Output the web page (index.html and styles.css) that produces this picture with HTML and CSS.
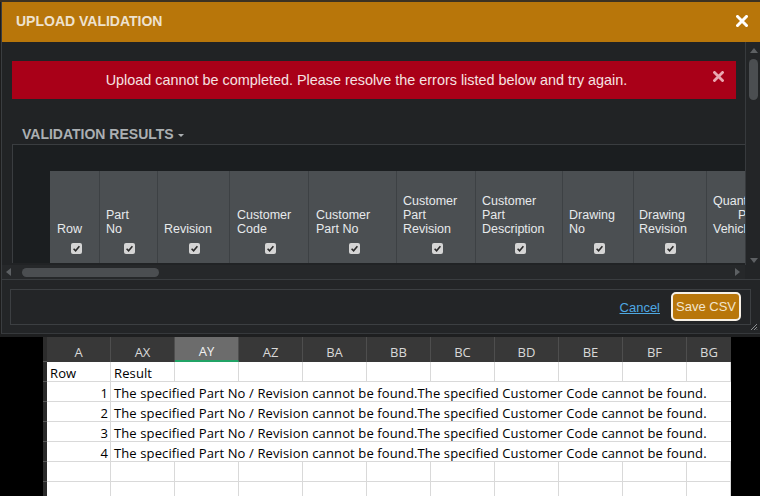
FILE: index.html
```html
<!DOCTYPE html>
<html>
<head>
<meta charset="utf-8">
<title>Upload Validation</title>
<link rel="stylesheet" href="styles.css">
</head>
<body>
<div class="page">
  <div class="backdrop"></div>
  <div class="dialog">
    <div class="titlebar">
      <span class="title">UPLOAD VALIDATION</span>
      <svg class="title-x" width="12" height="12" viewBox="0 0 12 12"><path d="M1.5 1.5L10.5 10.5M10.5 1.5L1.5 10.5" stroke="#ffffff" stroke-width="3" stroke-linecap="square"/></svg>
    </div>
    <div class="scrollarea">
      <div class="content">
        <div class="alert">
          <span class="alert-text">Upload cannot be completed. Please resolve the errors listed below and try again.</span>
          <svg class="alert-x" width="11" height="11" viewBox="0 0 11 11"><path d="M1.5 1.5L9.5 9.5M9.5 1.5L1.5 9.5" stroke="#e9a7b0" stroke-width="2.8" stroke-linecap="square"/></svg>
        </div>
        <div class="section">VALIDATION RESULTS<span class="caret"></span></div>
        <div class="gridbox">
          <div class="thead">
            <div class="th c1"><div class="lbl">Row</div><svg class="cb" width="11" height="11" viewBox="0 0 11 11"><rect width="11" height="11" rx="2" fill="#d5d5d5"/><path d="M2.6 5.7L4.6 7.8L8.4 3.2" fill="none" stroke="#2b2b2b" stroke-width="1.6"/></svg></div>
            <div class="th c2"><div class="lbl">Part<br>No</div><svg class="cb" width="11" height="11" viewBox="0 0 11 11"><rect width="11" height="11" rx="2" fill="#d5d5d5"/><path d="M2.6 5.7L4.6 7.8L8.4 3.2" fill="none" stroke="#2b2b2b" stroke-width="1.6"/></svg></div>
            <div class="th c3"><div class="lbl">Revision</div><svg class="cb" width="11" height="11" viewBox="0 0 11 11"><rect width="11" height="11" rx="2" fill="#d5d5d5"/><path d="M2.6 5.7L4.6 7.8L8.4 3.2" fill="none" stroke="#2b2b2b" stroke-width="1.6"/></svg></div>
            <div class="th c4"><div class="lbl">Customer<br>Code</div><svg class="cb" width="11" height="11" viewBox="0 0 11 11"><rect width="11" height="11" rx="2" fill="#d5d5d5"/><path d="M2.6 5.7L4.6 7.8L8.4 3.2" fill="none" stroke="#2b2b2b" stroke-width="1.6"/></svg></div>
            <div class="th c5"><div class="lbl">Customer<br>Part No</div><svg class="cb" width="11" height="11" viewBox="0 0 11 11"><rect width="11" height="11" rx="2" fill="#d5d5d5"/><path d="M2.6 5.7L4.6 7.8L8.4 3.2" fill="none" stroke="#2b2b2b" stroke-width="1.6"/></svg></div>
            <div class="th c6"><div class="lbl">Customer<br>Part<br>Revision</div><svg class="cb" width="11" height="11" viewBox="0 0 11 11"><rect width="11" height="11" rx="2" fill="#d5d5d5"/><path d="M2.6 5.7L4.6 7.8L8.4 3.2" fill="none" stroke="#2b2b2b" stroke-width="1.6"/></svg></div>
            <div class="th c7"><div class="lbl">Customer<br>Part<br>Description</div><svg class="cb" width="11" height="11" viewBox="0 0 11 11"><rect width="11" height="11" rx="2" fill="#d5d5d5"/><path d="M2.6 5.7L4.6 7.8L8.4 3.2" fill="none" stroke="#2b2b2b" stroke-width="1.6"/></svg></div>
            <div class="th c8"><div class="lbl">Drawing<br>No</div><svg class="cb" width="11" height="11" viewBox="0 0 11 11"><rect width="11" height="11" rx="2" fill="#d5d5d5"/><path d="M2.6 5.7L4.6 7.8L8.4 3.2" fill="none" stroke="#2b2b2b" stroke-width="1.6"/></svg></div>
            <div class="th c9"><div class="lbl">Drawing<br>Revision</div><svg class="cb" width="11" height="11" viewBox="0 0 11 11"><rect width="11" height="11" rx="2" fill="#d5d5d5"/><path d="M2.6 5.7L4.6 7.8L8.4 3.2" fill="none" stroke="#2b2b2b" stroke-width="1.6"/></svg></div>
            <div class="th c10"><div class="lbl">Quantity<br><span class="indent">Per</span><br>Vehicle</div><svg class="cb" width="11" height="11" viewBox="0 0 11 11"><rect width="11" height="11" rx="2" fill="#d5d5d5"/><path d="M2.6 5.7L4.6 7.8L8.4 3.2" fill="none" stroke="#2b2b2b" stroke-width="1.6"/></svg></div>
          </div>
        </div>
      </div>
      <div class="vscroll">
        <span class="arrow-up"></span>
        <span class="vthumb"></span>
        <span class="arrow-down"></span>
      </div>
      <div class="hscroll">
        <span class="arrow-left"></span>
        <span class="hthumb"></span>
        <span class="arrow-right"></span>
      </div>
      <div class="corner"></div>
    </div>
    <div class="footer">
      <div class="footbox">
        <a class="cancel" href="#">Cancel</a>
        <button class="save">Save CSV</button>
      </div>
      <svg class="grip" width="8" height="8" viewBox="0 0 8 8"><path d="M7 1L1 7M7 4L4 7M7 6.5L6.5 7" stroke="#8a8d90" stroke-width="1"/></svg>
    </div>
  </div>
  <div class="gap"></div>
  <div class="excel">
    <div class="black"></div>
    <div class="sheet">
      <div class="ch rh"></div><div class="ch">A</div><div class="ch">AX</div><div class="ch sel">AY</div><div class="ch">AZ</div><div class="ch">BA</div><div class="ch">BB</div><div class="ch">BC</div><div class="ch">BD</div><div class="ch">BE</div><div class="ch">BF</div><div class="ch last">BG</div>

      <div class="rh"></div><div class="c">Row</div><div class="c">Result</div><div class="c"></div><div class="c"></div><div class="c"></div><div class="c"></div><div class="c"></div><div class="c"></div><div class="c"></div><div class="c"></div><div class="c"></div>

      <div class="rh"></div><div class="c num">1</div><div class="c wide">The specified Part No / Revision cannot be found.The specified Customer Code cannot be found.</div>
      <div class="rh"></div><div class="c num">2</div><div class="c wide">The specified Part No / Revision cannot be found.The specified Customer Code cannot be found.</div>
      <div class="rh"></div><div class="c num">3</div><div class="c wide">The specified Part No / Revision cannot be found.The specified Customer Code cannot be found.</div>
      <div class="rh"></div><div class="c num">4</div><div class="c wide">The specified Part No / Revision cannot be found.The specified Customer Code cannot be found.</div>

      <div class="rh"></div><div class="c"></div><div class="c"></div><div class="c"></div><div class="c"></div><div class="c"></div><div class="c"></div><div class="c"></div><div class="c"></div><div class="c"></div><div class="c"></div><div class="c"></div>
      <div class="rh"></div><div class="c"></div><div class="c"></div><div class="c"></div><div class="c"></div><div class="c"></div><div class="c"></div><div class="c"></div><div class="c"></div><div class="c"></div><div class="c"></div><div class="c"></div>
    </div>
    <div class="black"></div>
  </div>
</div>
</body>
</html>
```
FILE: styles.css
```css
* { box-sizing: border-box; }
body {
  margin: 0;
  background: #161616;
  font-family: "Liberation Sans", Arial, sans-serif;
}
.page {
  width: 760px;
  height: 496px;
  overflow: hidden;
  background: #1c1c1c;
}
.backdrop {
  height: 2px;
  background: #3b3122;
}
.dialog {
  margin-left: 1px;
  border-left: 1px solid #3a3d40;
  border-bottom: 1px solid #36393c;
  background: #212325;
}
.titlebar {
  height: 40px;
  background: #b8760a;
  display: flex;
  align-items: center;
  justify-content: space-between;
  padding: 0 12px 2px 14px;
}
.title {
  font-size: 14px;
  font-weight: bold;
  color: #eee2cf;
  line-height: 16px;
}
.title-x { display: block; margin-top: -1px; }

.scrollarea {
  display: grid;
  grid-template-columns: 743px 15px;
  grid-template-rows: 223px 14px;
}
.content {
  overflow: hidden;
  background: #212325;
}
.alert {
  margin: 19px 9px 0 10px;
  height: 38px;
  background: #a90018;
  display: flex;
  align-items: center;
  padding-left: 8px;
}
.alert-text {
  flex: 1;
  text-align: center;
  font-size: 14.4px;
  line-height: 38px;
  color: #f6e2e2;
  white-space: nowrap;
}
.alert-x { display: block; margin-right: 12px; margin-top: -7px; }
.section {
  margin: 27px 0 0 20px;
  font-size: 14px;
  line-height: 16px;
  height: 18px;
  font-weight: bold;
  color: #abafb2;
}
.caret {
  display: inline-block;
  width: 0;
  height: 0;
  margin-left: 4px;
  vertical-align: 2px;
  border-left: 3px solid transparent;
  border-right: 3px solid transparent;
  border-top: 3px solid #abafb2;
}
.gridbox {
  margin-left: 10px;
  border-top: 1px solid #3a3d40;
  border-left: 1px solid #3a3d40;
  background: #1b1e20;
  padding: 26px 0 0 37px;
}
.thead {
  display: flex;
  height: 92px;
}
.th {
  flex-shrink: 0;
  background: #4b4f52;
  border-right: 1px solid #3d4144;
  display: flex;
  flex-direction: column;
  justify-content: flex-end;
  padding: 0 4px 9px 6px;
  color: #e7eaec;
  font-size: 12.5px;
  line-height: 14px;
}
.th .lbl { white-space: nowrap; }
.th .cb { display: block; margin: 7px auto 0; }
.indent { display: inline-block; margin-left: 25px; }
.c1 { width: 50px; padding-left: 7px; }
.c2 { width: 58px; }
.c3 { width: 72px; }
.c4 { width: 79px; padding-left: 7px; }
.c5 { width: 88px; padding-left: 7px; }
.c6 { width: 79px; }
.c7 { width: 87px; }
.c8 { width: 71px; }
.c9 { width: 73px; padding-left: 5px; }
.c10 { width: 90px; }

.vscroll {
  background: #232527;
  border-left: 1px solid #373a3d;
  display: flex;
  flex-direction: column;
  align-items: center;
  padding: 6px 0 2px 1px;
}
.arrow-up {
  width: 0; height: 0;
  border-left: 4px solid transparent;
  border-right: 4px solid transparent;
  border-bottom: 5px solid #5d6063;
}
.vthumb {
  margin-top: 6px;
  width: 9px;
  height: 41px;
  border-radius: 5px;
  background: #4b4e51;
}
.arrow-down {
  margin-top: auto;
  width: 0; height: 0;
  border-left: 4px solid transparent;
  border-right: 4px solid transparent;
  border-top: 5px solid #5d6063;
}
.hscroll {
  background: #26282a;
  display: flex;
  align-items: center;
  padding: 0 5px 0 4px;
}
.arrow-left {
  width: 0; height: 0;
  border-top: 4px solid transparent;
  border-bottom: 4px solid transparent;
  border-right: 5px solid #5d6063;
}
.hthumb {
  margin-left: 11px;
  width: 137px;
  height: 9px;
  border-radius: 5px;
  background: #4b4e51;
}
.arrow-right {
  margin-left: auto;
  width: 0; height: 0;
  border-top: 4px solid transparent;
  border-bottom: 4px solid transparent;
  border-left: 5px solid #5d6063;
}
.corner { background: #232527; }

.footer {
  border-top: 1px solid #3a3d40;
  background: #232527;
  padding: 9px 9px 8px 8px;
  position: relative;
}
.footbox {
  height: 36px;
  border: 1px solid #3c3f42;
  display: flex;
  align-items: center;
  justify-content: flex-end;
  padding-right: 9px;
}
.cancel {
  font-size: 13px;
  color: #4ea8e2;
  text-decoration: underline;
  margin-right: 11px;
  margin-top: 1px;
}
.save {
  width: 70px;
  height: 29px;
  margin-top: -2px;
  padding: 0;
  background: #b8760a;
  border: 2px solid #f6f0e6;
  border-radius: 5px;
  color: #f3e5cd;
  font-family: "Liberation Sans", Arial, sans-serif;
  font-size: 13px;
}
.grip {
  position: absolute;
  right: 2px;
  bottom: 2px;
}
.gap {
  height: 3px;
  background: #1e1f20;
}

.excel {
  display: flex;
  height: 159px;
}
.black {
  width: 43px;
  background: #000;
}
.excel .black:last-child { width: 29px; }
.sheet {
  width: 688px;
  display: grid;
  grid-template-columns: 4px repeat(10, 64px) 44px;
  grid-template-rows: 25px repeat(7, 20px);
  overflow: hidden;
  background: #ffffff;
  font-family: "Open Sans", "Noto Sans", sans-serif;
}
.ch {
  background: #383838;
  color: #d8d8d8;
  font-size: 13px;
  text-align: center;
  line-height: 25px;
  padding-top: 3px;
  border-right: 1px solid #4e4e4e;
}
.ch.rh { border-right: none; background: #2c2c2c; }
.ch.last { border-right: none; }
.ch.sel {
  background: #6c6c6c;
  color: #f2f2f2;
  border-bottom: 2px solid #21a366;
  line-height: 22px;
}
.rh {
  background: #2a2a2a;
  border-bottom: 1px solid #555;
}
.c {
  border-right: 1px solid #d9d9d9;
  border-bottom: 1px solid #d9d9d9;
  font-size: 13px;
  line-height: 20px;
  padding: 1px 0 0 3px;
  color: #000;
  white-space: nowrap;
  letter-spacing: 0.12px;
}
.c.num { text-align: right; padding-right: 2px; }
.c.wide { grid-column: span 10; border-right: none; }
```
